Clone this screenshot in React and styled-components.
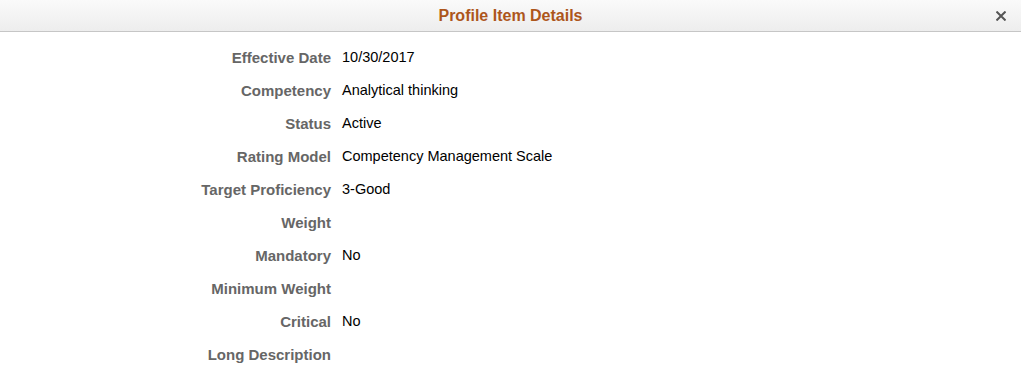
import React from "react";
import styled, { createGlobalStyle } from "styled-components";

const GlobalStyle = createGlobalStyle`
  body {
    margin: 0;
    background: #fff;
    font-family: "Liberation Sans", Arial, sans-serif;
  }
`;

const Dialog = styled.div`
  width: 1021px;
  height: 391px;
  background: #fff;
  overflow: hidden;
`;

const Header = styled.div`
  height: 31px;
  border-bottom: 1px solid #c6c6c6;
  background: linear-gradient(#fafafa, #ededed);
  display: flex;
  align-items: center;
  justify-content: center;
  position: relative;
`;

const Title = styled.h1`
  margin: 0;
  font-size: 16px;
  font-weight: 700;
  color: #ad561b;
`;

const Close = styled.button`
  position: absolute;
  right: 14px;
  top: 10px;
  width: 12px;
  height: 12px;
  padding: 0;
  border: none;
  background: transparent;
  display: flex;
  align-items: center;
  justify-content: center;
`;

const Rows = styled.div`
  display: grid;
  grid-template-columns: 331px 1fr;
  column-gap: 11px;
  row-gap: 16px;
  padding-top: 17px;
`;

const Label = styled.div`
  text-align: right;
  font-size: 15px;
  font-weight: 700;
  color: #666;
  line-height: 17px;
`;

const Value = styled.div`
  font-size: 14.5px;
  color: #000;
  line-height: 17px;
`;

const items = [
  ["Effective Date", "10/30/2017"],
  ["Competency", "Analytical thinking"],
  ["Status", "Active"],
  ["Rating Model", "Competency Management Scale"],
  ["Target Proficiency", "3-Good"],
  ["Weight", ""],
  ["Mandatory", "No"],
  ["Minimum Weight", ""],
  ["Critical", "No"],
  ["Long Description", ""],
];

const App = () => {
  return (
    <Dialog>
      <GlobalStyle />
      <Header>
        <Title>Profile Item Details</Title>
        <Close aria-label="Close">
          <svg width="10" height="10" viewBox="0 0 10 10">
            <path
              d="M1.2 1.2 L8.8 8.8 M8.8 1.2 L1.2 8.8"
              stroke="#555"
              strokeWidth="2"
              strokeLinecap="square"
            />
          </svg>
        </Close>
      </Header>
      <Rows>
        {items.map(([label, value]) => (
          <React.Fragment key={label}>
            <Label>{label}</Label>
            <Value>{value}</Value>
          </React.Fragment>
        ))}
      </Rows>
    </Dialog>
  );
};

export default App;
